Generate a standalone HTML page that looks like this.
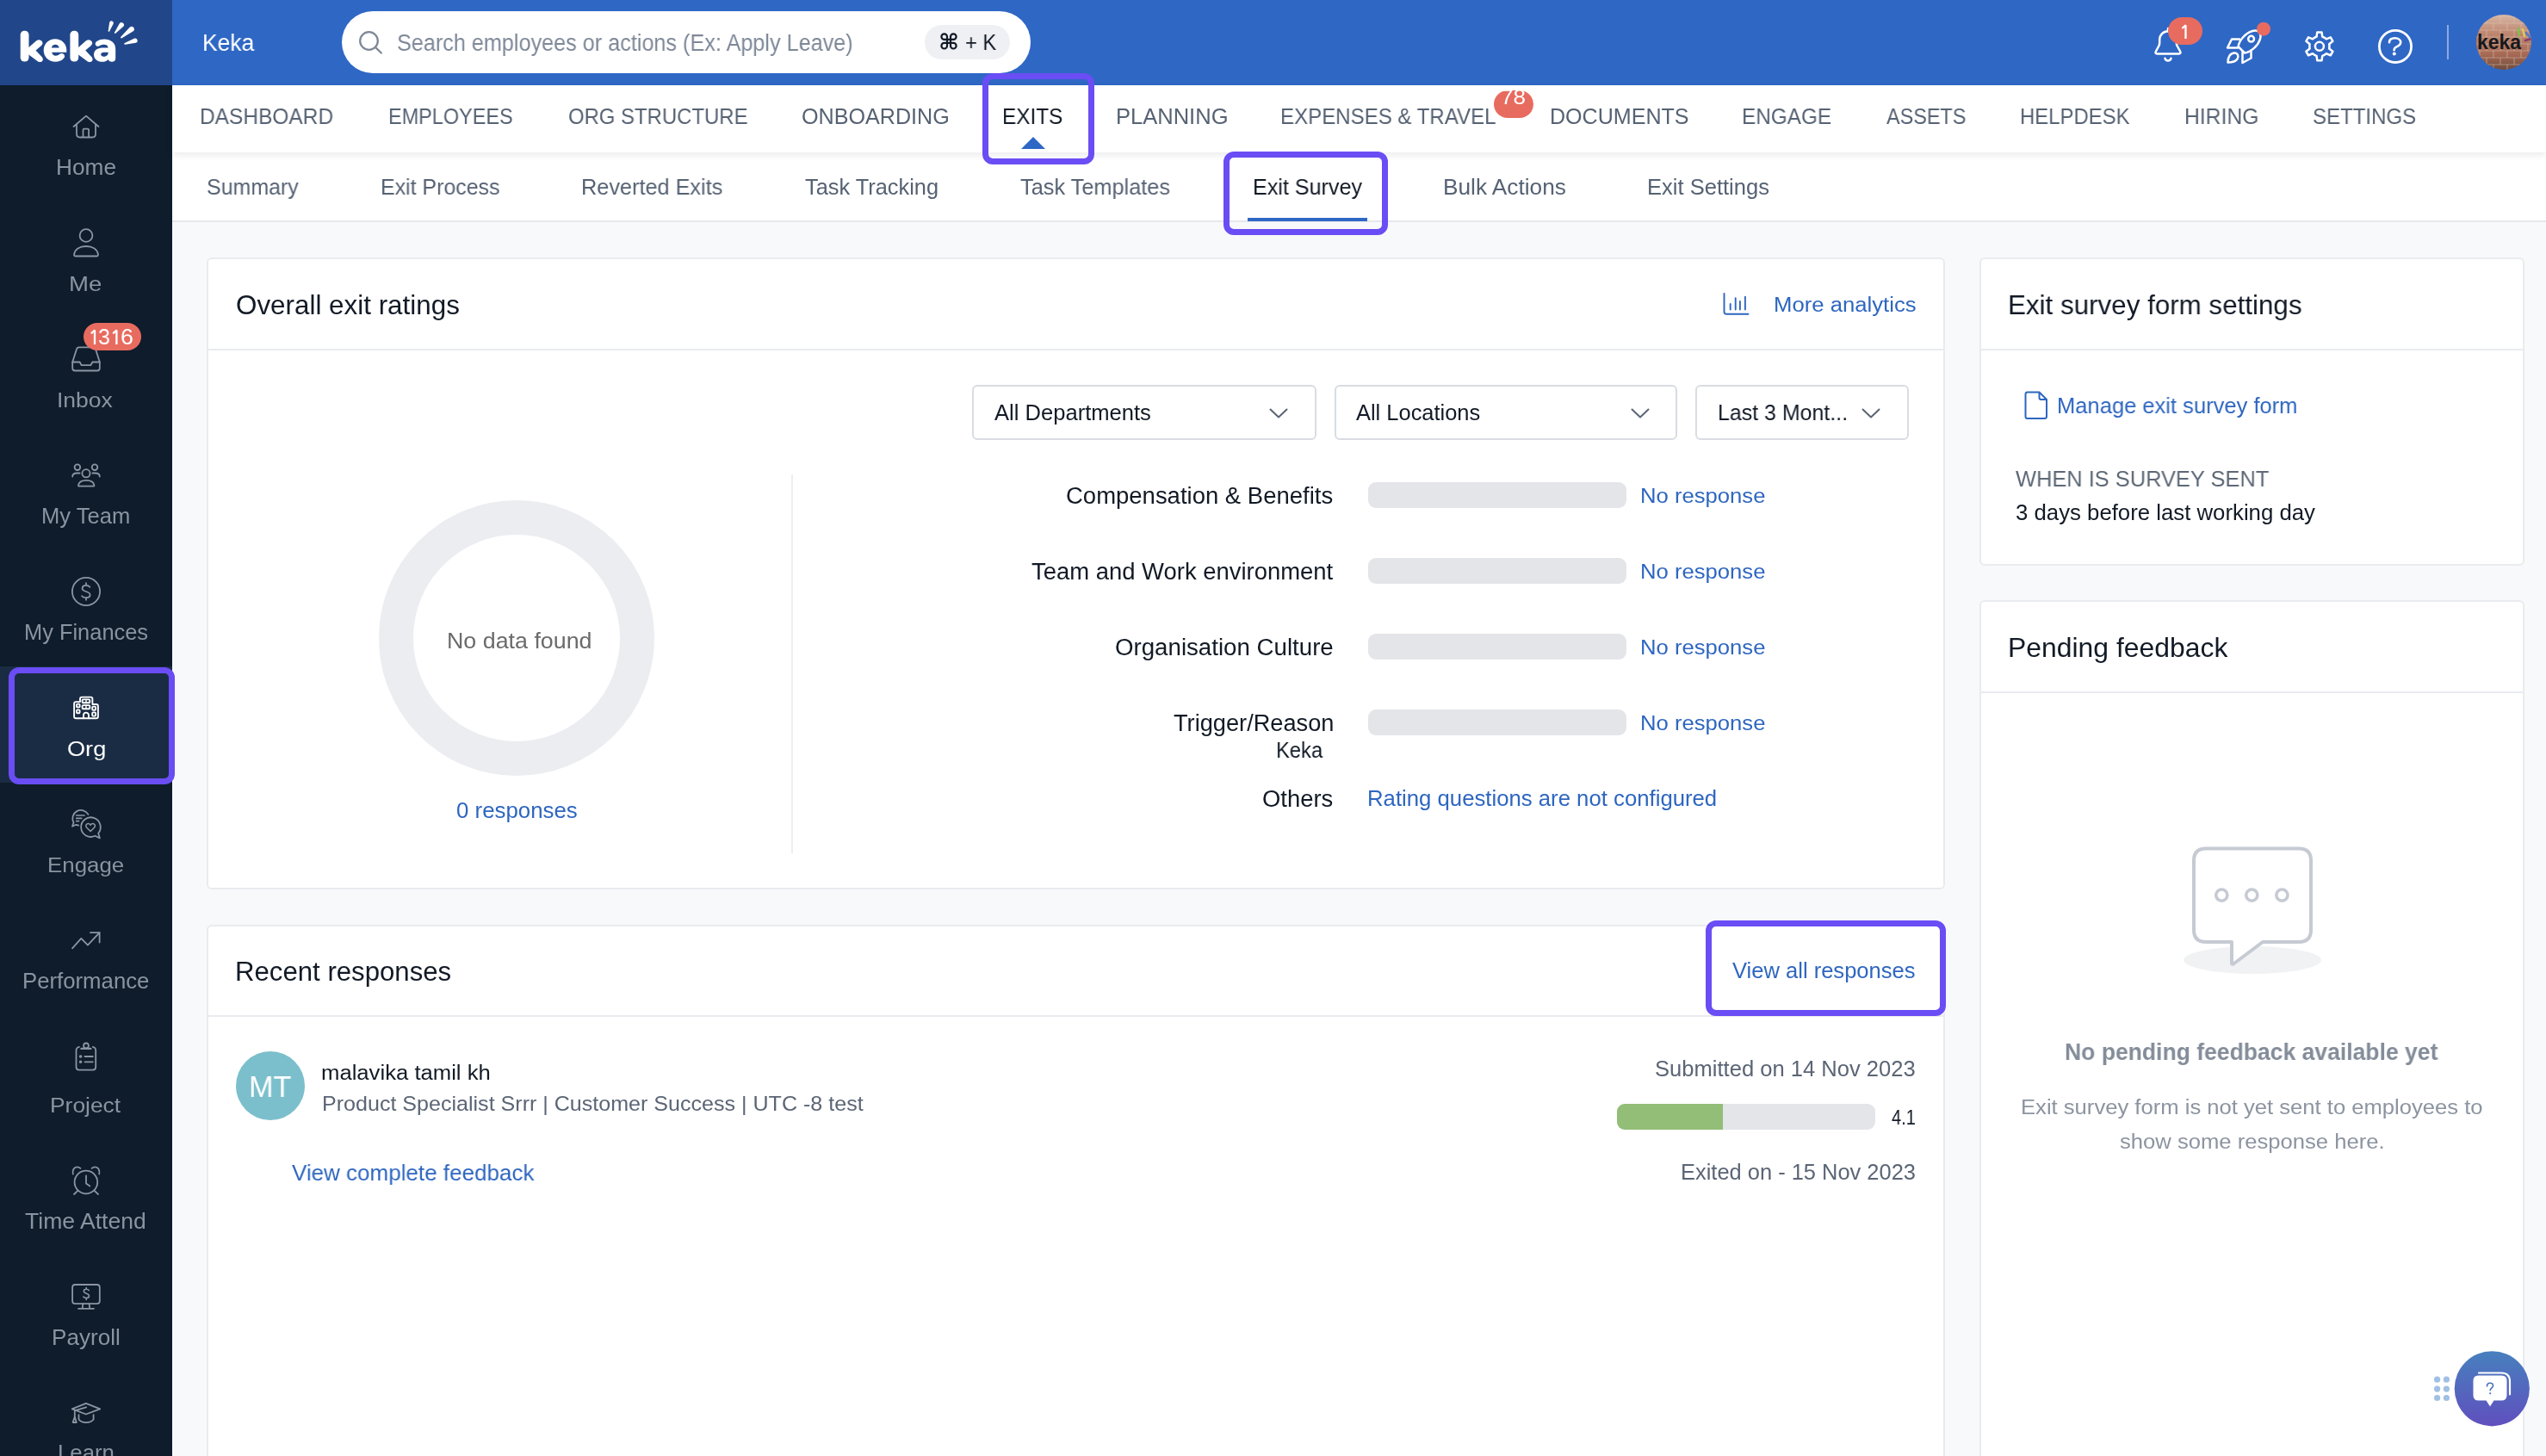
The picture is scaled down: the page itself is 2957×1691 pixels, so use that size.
<!DOCTYPE html>
<html><head><meta charset="utf-8"><title>Keka Exit Survey</title>
<style>
html,body{margin:0;padding:0;}
body{width:2957px;height:1691px;overflow:hidden;position:relative;background:#F8F9FB;font-family:'Liberation Sans', sans-serif;}
.t{position:absolute;white-space:nowrap;transform-origin:0 0;z-index:6;-webkit-font-smoothing:antialiased;will-change:transform;}
.a{position:absolute;box-sizing:border-box;}

</style></head><body>
<!-- top bar -->
<div class="a" style="left:0;top:0;width:200px;height:99px;background:#21478A"></div>
<div class="a" style="left:200px;top:0;width:2757px;height:99px;background:#2F67C5"></div>
<div class="a" style="left:397px;top:13px;width:800px;height:72px;border-radius:36px;background:#fff"></div>
<div class="a" style="left:1074px;top:29px;width:99px;height:40px;border-radius:20px;background:#EEF0F3"></div>
<!-- sidebar -->
<div class="a" style="left:0;top:99px;width:200px;height:1592px;background:#0E1C2B"></div>
<div class="a" style="left:0;top:774px;width:200px;height:135px;background:#1A2C43"></div>
<!-- subnav -->
<div class="a" style="left:200px;top:177px;width:2757px;height:81px;background:#fff;border-bottom:2px solid #E6E8EC"></div>
<!-- nav -->
<div class="a" style="left:200px;top:99px;width:2757px;height:78px;background:#fff;box-shadow:0 3px 8px rgba(20,30,50,0.09)"></div>
<!-- cards -->
<div class="a" style="left:240px;top:299px;width:2019px;height:734px;background:#fff;border:2px solid #E9EBEF;border-radius:6px"></div>
<div class="a" style="left:240px;top:405px;width:2019px;height:2px;background:#E9EBEF"></div>
<div class="a" style="left:240px;top:1074px;width:2019px;height:700px;background:#fff;border:2px solid #E9EBEF;border-radius:6px"></div>
<div class="a" style="left:240px;top:1179px;width:2019px;height:2px;background:#E9EBEF"></div>
<div class="a" style="left:2299px;top:299px;width:633px;height:358px;background:#fff;border:2px solid #E9EBEF;border-radius:6px"></div>
<div class="a" style="left:2299px;top:405px;width:633px;height:2px;background:#E9EBEF"></div>
<div class="a" style="left:2299px;top:697px;width:633px;height:1100px;background:#fff;border:2px solid #E9EBEF;border-radius:6px"></div>
<div class="a" style="left:2299px;top:803px;width:633px;height:2px;background:#E9EBEF"></div>
<!-- dropdowns -->
<div class="a" style="left:1129px;top:447px;width:400px;height:64px;border:2px solid #D9DCE2;border-radius:6px"></div>
<div class="a" style="left:1550px;top:447px;width:398px;height:64px;border:2px solid #D9DCE2;border-radius:6px"></div>
<div class="a" style="left:1969px;top:447px;width:248px;height:64px;border:2px solid #D9DCE2;border-radius:6px"></div>
<!-- divider vertical -->
<div class="a" style="left:919px;top:551px;width:2px;height:440px;background:#ECEEF1"></div>
<!-- donut -->
<div class="a" style="left:440px;top:581px;width:320px;height:320px;border-radius:50%;border:40px solid #ECEDF1"></div>
<!-- bars -->
<div class="a" style="left:1589px;top:560px;width:300px;height:30px;border-radius:9px;background:#E4E5E9"></div>
<div class="a" style="left:1589px;top:648px;width:300px;height:30px;border-radius:9px;background:#E4E5E9"></div>
<div class="a" style="left:1589px;top:736px;width:300px;height:30px;border-radius:9px;background:#E4E5E9"></div>
<div class="a" style="left:1589px;top:824px;width:300px;height:30px;border-radius:9px;background:#E4E5E9"></div>
<!-- response -->
<div class="a" style="left:274px;top:1221px;width:80px;height:80px;border-radius:50%;background:#7BBFCC"></div>
<div class="a" style="left:1878px;top:1282px;width:300px;height:30px;border-radius:9px;background:#E4E5E9;overflow:hidden"><div style="width:123px;height:30px;background:#93BE77"></div></div>
<!-- nav decorations -->
<div class="a" style="left:1449px;top:253px;width:139px;height:4px;background:#2F67C5"></div>
<div class="a" style="left:1735px;top:105px;width:46px;height:32px;border-radius:16px;background:#E86B60;z-index:5"></div>
<div class="a" style="left:97px;top:375px;width:67px;height:32px;border-radius:16px;background:#E86B60;z-index:5"></div>
<div class="a" style="left:2518px;top:20px;width:40px;height:32px;border-radius:16px;background:#E86B60;z-index:5"></div>
<!-- purple highlight boxes -->
<div class="a" style="left:1141px;top:85px;width:130px;height:106px;border:7px solid #6A4DF4;border-radius:12px;z-index:5"></div>
<div class="a" style="left:1421px;top:176px;width:191px;height:97px;border:7px solid #6A4DF4;border-radius:12px;z-index:5"></div>
<div class="a" style="left:10px;top:775px;width:193px;height:136px;border:7px solid #6A4DF4;border-radius:12px;z-index:5"></div>
<div class="a" style="left:1981px;top:1069px;width:279px;height:111px;border:7px solid #6A4DF4;border-radius:12px;z-index:5"></div>
<!-- svg overlay -->
<svg class="a" style="left:0;top:0;z-index:4" width="2957" height="1691" viewBox="0 0 2957 1691" fill="none" stroke-linecap="round" stroke-linejoin="round">
  <!-- logo -->
  <g fill="#fff" stroke="none">
    <rect x="23.7" y="35.7" width="9.8" height="35.8" rx="4.6"/>
    <path d="M30,58 L42,47.5 Q46,44.8 48.8,48 Q50.5,50.5 48,53 L41.5,58.6 L49,66.5 Q51,69.5 48.5,71.5 Q45.5,73 42.8,70.5 L30,61 Z"/>
    <path d="M64,45.3 C71.5,45.3 77.3,50.8 77.3,58 L77.3,60.8 L60.2,60.8 C60.8,63.5 62.5,64.7 64.8,64.7 C66.5,64.7 67.8,64 69,63 Q72,61 74.5,63.5 Q76,65.8 73.8,68 C71.5,70.5 68,71.8 64.5,71.8 C56.5,71.8 50.7,66.2 50.7,58.6 C50.7,51 56.5,45.3 64,45.3 Z M59.8,55.5 L68.8,55.5 C68.3,53 66.5,51.7 64.3,51.7 C62,51.7 60.3,53 59.8,55.5 Z" fill-rule="evenodd"/>
    <rect x="81.4" y="35.7" width="9.8" height="35.8" rx="4.6"/>
    <path d="M87.7,58 L99.7,47.5 Q103.7,44.8 106.5,48 Q108.2,50.5 105.7,53 L99.2,58.6 L106.7,66.5 Q108.7,69.5 106.2,71.5 Q103.2,73 100.5,70.5 L87.7,61 Z"/>
    <path d="M121,45.5 C128.5,45.5 134.2,49.5 134.2,57 L134.2,67.5 Q134.2,71.8 129.8,71.8 Q126.5,71.8 125.8,69 C124.2,70.9 121.8,71.8 119,71.8 C113,71.8 109,68.5 109,63.5 C109,57.5 114.5,55.5 119.5,55.5 L125.6,55.5 C125.3,52.8 123.3,51.8 120.8,51.8 C118.8,51.8 117.2,52.3 115.5,53.3 Q112.5,54.8 111,52.3 Q109.8,49.5 112.8,47.8 C115.2,46.3 118,45.5 121,45.5 Z M125.6,60.8 L120.5,60.8 C118.5,60.8 117.2,61.7 117.2,63.3 C117.2,64.9 118.6,65.8 120.5,65.8 C123.3,65.8 125.6,64 125.6,61.5 Z" fill-rule="evenodd"/>
  </g>
  <g fill="#fff" stroke="none">
    <path d="M127.21,36.19 L131.74,27.42 A2.4,2.4 0 0 0 127.18,25.94 L125.69,35.69 A0.8,0.8 0 0 0 127.21,36.19 Z"/>
    <path d="M134.47,38.57 L143.33,30.78 A2.9,2.9 0 0 0 138.82,27.13 L133.07,37.43 A0.9,0.9 0 0 0 134.47,38.57 Z"/>
    <path d="M141.61,44.25 L154.73,36.36 A3.1,3.1 0 0 0 150.84,31.53 L140.35,42.69 A1.0,1.0 0 0 0 141.61,44.25 Z"/>
    <path d="M145.32,51.70 L157.81,49.77 A2.7,2.7 0 0 0 156.23,44.61 L144.80,49.98 A0.9,0.9 0 0 0 145.32,51.70 Z"/>
  </g>
  <!-- exits triangle -->
  <polygon points="1186,173 1214,173 1200,159" fill="#2F67C5" stroke="none"/>
  <!-- search icon -->
  <circle cx="428.5" cy="47.5" r="10.3" stroke="#7E8898" stroke-width="2.3"/>
  <line x1="436.2" y1="55.2" x2="442.8" y2="61.5" stroke="#7E8898" stroke-width="2.3"/>
  <!-- cmd symbol -->
  <path transform="translate(1102,47.9)" stroke="#121A26" stroke-width="2.2" d="M-2,-2 H2 V2 H-2 Z M-2,-2 V-5.3 A3.3,3.3 0 1 0 -5.3,-2 H-2 M2,-2 V-5.3 A3.3,3.3 0 1 1 5.3,-2 H2 M-2,2 V5.3 A3.3,3.3 0 1 1 -5.3,2 H-2 M2,2 V5.3 A3.3,3.3 0 1 0 5.3,2 H2"/>
  <!-- chevrons -->
  <polyline points="1475.5,475.5 1485,484.5 1494.5,475.5" stroke="#5A6473" stroke-width="2"/>
  <polyline points="1895.5,475.5 1905,484.5 1914.5,475.5" stroke="#5A6473" stroke-width="2"/>
  <polyline points="2163.5,475.5 2173,484.5 2182.5,475.5" stroke="#5A6473" stroke-width="2"/>
  <!-- topbar icons -->
  <g stroke="#fff" stroke-width="2.5">
    <path d="M2505.5,62.5 H2530.5 Q2533.5,62.5 2532,59.5 L2528.5,53 Q2527.8,51.5 2527.8,49.5 L2527.8,46 A9.8,9.8 0 0 0 2508.2,46 L2508.2,49.5 Q2508.2,51.5 2507.5,53 L2504,59.5 Q2502.5,62.5 2505.5,62.5 Z"/>
    <line x1="2518" y1="33" x2="2518" y2="36"/>
    <path d="M2514.5,67.8 A3.6,3.6 0 0 0 2521.5,67.8"/>
    <path d="M2599.6,54.1 A16,9 -45 1 1 2607.0,61.5 Z"/>
    <circle cx="2614.6" cy="45.2" r="3.4"/>
    <path d="M2601,45.5 L2592,45.5 L2587,55.5 L2599,55.5"/>
    <path d="M2604.5,60.5 L2604.5,73 L2614.5,67.5 L2614.5,58.5"/>
    <path d="M2587.5,72.5 C2587.5,66 2590.5,61.5 2595,61.5 C2599,61.5 2600.5,65 2598.5,68.5 C2596.5,71.5 2592,72.5 2587.5,72.5 Z"/>
    <path d="M2688.10,43.75 L2690.51,42.71 L2691.30,37.40 L2696.50,37.40 L2697.29,42.71 L2699.70,43.75 L2701.81,45.32 L2706.80,43.35 L2709.40,47.85 L2705.20,51.19 L2705.50,53.80 L2705.20,56.41 L2709.40,59.75 L2706.80,64.25 L2701.81,62.28 L2699.70,63.85 L2697.29,64.89 L2696.50,70.20 L2691.30,70.20 L2690.51,64.89 L2688.10,63.85 L2685.99,62.28 L2681.00,64.25 L2678.40,59.75 L2682.60,56.41 L2682.30,53.80 L2682.60,51.19 L2678.40,47.85 L2681.00,43.35 L2685.99,45.32 Z"/>
    <circle cx="2693.9" cy="53.8" r="5"/>
    <circle cx="2782" cy="53.9" r="18.6" stroke-width="2.8"/>
    <path d="M2775,49.2 C2775,45.8 2777.8,44.3 2781.6,44.3 C2785.6,44.3 2788.2,46.4 2788.2,49.2 C2788.2,52 2786,53.2 2783.4,54.4 C2781.4,55.3 2780.6,56.3 2780.6,58.2" stroke-width="2.6"/>
  </g>
  <circle cx="2780.8" cy="62.6" r="2" fill="#fff" stroke="none"/>
  <line x1="2843" y1="29" x2="2843" y2="69" stroke="rgba(255,255,255,0.45)" stroke-width="2" stroke-linecap="butt"/>
  <circle cx="2629" cy="33.7" r="8" fill="#E86B60" stroke="none"/>
  <!-- avatar -->
  <defs>
    <linearGradient id="brick" x1="0" y1="0" x2="0" y2="1">
      <stop offset="0" stop-color="#D9BBA8"/>
      <stop offset="0.35" stop-color="#BE8670"/>
      <stop offset="0.7" stop-color="#A86A55"/>
      <stop offset="1" stop-color="#6A4A3C"/>
    </linearGradient>
    <clipPath id="avclip"><circle cx="2908" cy="49" r="32"/></clipPath>
    <linearGradient id="chatg" x1="0" y1="0" x2="0" y2="1">
      <stop offset="0" stop-color="#4780BE"/>
      <stop offset="1" stop-color="#604FBE"/>
    </linearGradient>
  </defs>
  <g clip-path="url(#avclip)">
    <rect x="2874" y="15" width="68" height="68" fill="url(#brick)" stroke="none"/>
    <g stroke="rgba(225,200,185,0.45)" stroke-width="1.2" stroke-linecap="butt">
      <line x1="2874" y1="19" x2="2942" y2="19"/><line x1="2874" y1="27" x2="2942" y2="27"/><line x1="2874" y1="35" x2="2942" y2="35"/><line x1="2874" y1="43" x2="2942" y2="43"/><line x1="2874" y1="51" x2="2942" y2="51"/><line x1="2874" y1="59" x2="2942" y2="59"/><line x1="2874" y1="67" x2="2942" y2="67"/><line x1="2874" y1="75" x2="2942" y2="75"/>
      <line x1="2872" y1="19" x2="2872" y2="27"/><line x1="2888" y1="19" x2="2888" y2="27"/><line x1="2904" y1="19" x2="2904" y2="27"/><line x1="2920" y1="19" x2="2920" y2="27"/><line x1="2936" y1="19" x2="2936" y2="27"/><line x1="2864" y1="27" x2="2864" y2="35"/><line x1="2880" y1="27" x2="2880" y2="35"/><line x1="2896" y1="27" x2="2896" y2="35"/><line x1="2912" y1="27" x2="2912" y2="35"/><line x1="2928" y1="27" x2="2928" y2="35"/><line x1="2944" y1="27" x2="2944" y2="35"/><line x1="2872" y1="35" x2="2872" y2="43"/><line x1="2888" y1="35" x2="2888" y2="43"/><line x1="2904" y1="35" x2="2904" y2="43"/><line x1="2920" y1="35" x2="2920" y2="43"/><line x1="2936" y1="35" x2="2936" y2="43"/><line x1="2864" y1="43" x2="2864" y2="51"/><line x1="2880" y1="43" x2="2880" y2="51"/><line x1="2896" y1="43" x2="2896" y2="51"/><line x1="2912" y1="43" x2="2912" y2="51"/><line x1="2928" y1="43" x2="2928" y2="51"/><line x1="2944" y1="43" x2="2944" y2="51"/><line x1="2872" y1="51" x2="2872" y2="59"/><line x1="2888" y1="51" x2="2888" y2="59"/><line x1="2904" y1="51" x2="2904" y2="59"/><line x1="2920" y1="51" x2="2920" y2="59"/><line x1="2936" y1="51" x2="2936" y2="59"/><line x1="2864" y1="59" x2="2864" y2="67"/><line x1="2880" y1="59" x2="2880" y2="67"/><line x1="2896" y1="59" x2="2896" y2="67"/><line x1="2912" y1="59" x2="2912" y2="67"/><line x1="2928" y1="59" x2="2928" y2="67"/><line x1="2944" y1="59" x2="2944" y2="67"/><line x1="2872" y1="67" x2="2872" y2="75"/><line x1="2888" y1="67" x2="2888" y2="75"/><line x1="2904" y1="67" x2="2904" y2="75"/><line x1="2920" y1="67" x2="2920" y2="75"/><line x1="2936" y1="67" x2="2936" y2="75"/><line x1="2864" y1="75" x2="2864" y2="83"/><line x1="2880" y1="75" x2="2880" y2="83"/><line x1="2896" y1="75" x2="2896" y2="83"/><line x1="2912" y1="75" x2="2912" y2="83"/><line x1="2928" y1="75" x2="2928" y2="83"/><line x1="2944" y1="75" x2="2944" y2="83"/>
    </g>
    <text x="2877" y="57" font-family="Liberation Sans" font-weight="bold" font-size="24" fill="#15181C" stroke="none" textLength="51" lengthAdjust="spacingAndGlyphs">keka</text>
    <path d="M2925,33 L2926,41" stroke="#7BC24A" stroke-width="2.5"/>
    <path d="M2930,34 L2932,42" stroke="#E2C65A" stroke-width="2.5"/>
    <path d="M2934,38 L2938,43" stroke="#4C7BD0" stroke-width="2.5"/>
    <path d="M2933,47 L2940,45" stroke="#8A3A6A" stroke-width="2.5"/>
  </g>
  <!-- sidebar icons -->
  <g stroke="#8B95A3" stroke-width="1.8">
    <path d="M85.5,147 L100,134.6 L114.5,147 M89,144.5 V155.5 Q89,159.5 93,159.5 H107 Q111,159.5 111,155.5 V144.5 M96.5,159.5 V151 Q96.5,149.7 97.8,149.7 H101.8 Q103.1,149.7 103.1,151 V159.5"/>
    <circle cx="100" cy="273.5" r="7.4"/>
    <path d="M87.8,297.5 H112.2 Q114.2,297.5 113.9,295.3 C113,289.3 107.5,286 100,286 C92.5,286 87,289.3 86.1,295.3 Q85.8,297.5 87.8,297.5 Z"/>
    <path d="M84.2,420.5 L89,405.5 Q89.6,403.3 91.8,403.3 H108.2 Q110.4,403.3 111,405.5 L115.8,420.5 V427.5 Q115.8,430.5 112.8,430.5 H87.2 Q84.2,430.5 84.2,427.5 Z"/>
    <path d="M84.2,420.5 H92.6 L94.7,424.2 H105.3 L107.4,420.5 H115.8"/>
    <circle cx="100" cy="549.8" r="4.6"/>
    <path d="M92,564.6 H108.4 Q109.6,564.6 109.4,563.4 C108.7,560 105,557.8 100.2,557.8 C95.4,557.8 91.7,560 91,563.4 Q90.8,564.6 92,564.6 Z"/>
    <circle cx="89.9" cy="542.7" r="3.3"/>
    <circle cx="110" cy="542.7" r="3.3"/>
    <path d="M84.2,553.6 C84.2,551 86.2,549.5 89.5,549.5 H92.6"/>
    <path d="M115.8,553.6 C115.8,551 113.8,549.5 110.5,549.5 H107.4"/>
    <circle cx="100" cy="687" r="16.1"/>
    <path d="M104.3,681.8 C103.3,680.3 101.6,679.9 100,679.9 C97.6,679.9 95.6,681.2 95.6,683.4 C95.6,688 104.6,686 104.6,690.8 C104.6,693 102.6,694.2 100.1,694.2 C98.1,694.2 96.2,693.6 95.2,692.2 M100,677.2 V679.9 M100,694.2 V696.8"/>
    <path d="M102.5,945.9 A9.2,9.2 0 1 0 85.5,955.3 L84,959.8 L88.5,957.8 L91.2,958.7"/>
    <path d="M88.7,947 H98 M88.7,950.4 H94.7 M88.7,953.6 H91.5" stroke-width="1.7"/>
    <path d="M114.2,967.8 A11.3,11.3 0 1 0 110.4,970.8 L115.9,973.4 Z"/>
    <path d="M105.1,965.5 L100.8,961.3 C99.3,959.8 99.5,957.4 101.5,956.7 C103,956.2 104.3,957 105.1,958.2 C105.9,957 107.2,956.2 108.7,956.7 C110.7,957.4 110.9,959.8 109.4,961.3 Z" stroke-width="1.6"/>
    <polyline points="84,1101.3 94.3,1089.9 101.9,1097.7 115.6,1083.2"/>
    <polyline points="105,1083.2 115.6,1083.2 115.6,1094.5"/>
    <path d="M92,1215.8 Q88.5,1216.5 88.5,1220 V1239.3 Q88.5,1242.6 91.8,1242.6 H107.9 Q111.2,1242.6 111.2,1239.3 V1220 Q111.2,1216.5 107.8,1215.8"/>
    <circle cx="100" cy="1214.4" r="2.9"/>
    <path d="M94.4,1217.9 H105.5" stroke-width="2.2"/>
    <path d="M98.5,1227 H107.8 M98.5,1233.3 H107.8"/>
    <circle cx="93.6" cy="1227" r="0.8" stroke-width="2"/>
    <circle cx="93.6" cy="1233.3" r="0.8" stroke-width="2"/>
    <circle cx="99.9" cy="1373" r="13.3"/>
    <path d="M100,1365.3 V1374.4 L104.3,1377.5"/>
    <path d="M84.8,1363.5 C83.8,1359 86,1355.3 89.5,1355.3 C91,1355.3 92.5,1355.9 93.4,1356.8"/>
    <path d="M115.2,1363.5 C116.2,1359 114,1355.3 110.5,1355.3 C109,1355.3 107.5,1355.9 106.6,1356.8"/>
    <path d="M90.1,1383.1 L86,1387 M109.9,1383.1 L114,1387"/>
    <rect x="84.1" y="1492" width="31.7" height="22.2" rx="3.2"/>
    <path d="M96.4,1514.2 L95.6,1519.8 M103.5,1514.2 L104.3,1519.8 M91,1519.8 H109"/>
    <path d="M103.2,1498.6 C102.4,1497.6 101.3,1497.3 100.2,1497.3 C98.6,1497.3 97.3,1498.2 97.3,1499.6 C97.3,1502.8 103.5,1501.5 103.5,1504.9 C103.5,1506.5 102,1507.5 100.2,1507.5 C98.8,1507.5 97.5,1507 96.8,1506.1 M100.2,1495.6 V1497.3 M100.2,1507.5 V1509.4" stroke-width="1.6"/>
    <path d="M83.7,1636.3 L99.9,1629.8 L116.2,1636.3 L99.9,1642.5 Z"/>
    <path d="M86.8,1638.4 L100.2,1634.4 M86.8,1638.4 V1646"/>
    <path d="M86.8,1645.5 L84.6,1652 H88.8 Z"/>
    <path d="M91.5,1643.2 V1648.5 C93.5,1651 96.5,1652.1 100,1652.1 C103.5,1652.1 106.5,1651 108.6,1648.5 V1643.2"/>
  </g>
  <!-- org icon (white) -->
  <g stroke="#FFFFFF" stroke-width="1.9">
    <path d="M88.2,815.1 H93 V811.7 Q93,809.6 95.1,809.6 H105.3 Q107.4,809.6 107.4,811.7 V818 H111.8 Q113.9,818 113.9,820.1 V832.2 Q113.9,834.3 111.8,834.3 H88.2 Q86.1,834.3 86.1,832.2 V817.2 Q86.1,815.1 88.2,815.1 Z"/>
    <rect x="89" y="817.6" width="3.6" height="3.8" rx="1"/>
    <rect x="89" y="824.4" width="3.6" height="3.8" rx="1"/>
    <rect x="95.6" y="812.4" width="8.7" height="3.9" rx="1"/><path d="M100,812.4 V816.3" stroke-width="1.4"/>
    <rect x="95.6" y="819.1" width="8.7" height="4.2" rx="1"/><path d="M100,819.1 V823.3" stroke-width="1.4"/>
    <rect x="107.2" y="820.6" width="3.9" height="4.2" rx="1"/>
    <rect x="107.2" y="827.4" width="3.9" height="4.2" rx="1"/>
    <path d="M97,834.3 V830.6 A3,3 0 0 1 103,830.6 V834.3"/>
  </g>
  <!-- analytics icon -->
  <g stroke="#2E66C0" stroke-width="1.9">
    <path d="M2002.5,341 V362 Q2002.5,364.8 2005.3,364.8 H2030.5"/>
    <path d="M2009.7,353 V359.5 M2015.7,346.3 V359.5 M2020.9,350 V359.5 M2026.9,344.8 V359.5"/>
  </g>
  <!-- doc icon -->
  <path d="M2354.5,455.5 H2368.5 L2377,464 V483.5 Q2377,486 2374.5,486 H2354.5 Q2352.5,486 2352.5,483.5 V458 Q2352.5,455.5 2354.5,455.5 Z M2368.5,455.5 V462 Q2368.5,464 2370.5,464 H2377" stroke="#2E66C0" stroke-width="2"/>
  <!-- pending feedback illustration -->
  <ellipse cx="2616" cy="1115" rx="80" ry="16" fill="#F1F2F4" stroke="none"/>
  <path d="M2562,985.5 H2670 Q2684,985.5 2684,999.5 V1080 Q2684,1094 2670,1094 H2628 L2594,1119.5 Q2592,1120.5 2592,1118.5 V1094 H2562 Q2548,1094 2548,1080 V999.5 Q2548,985.5 2562,985.5 Z" fill="#fff" stroke="#C6CAD3" stroke-width="4"/>
  <circle cx="2580.3" cy="1039.6" r="6.6" stroke="#C6CAD3" stroke-width="3.6"/>
  <circle cx="2615.3" cy="1039.6" r="6.6" stroke="#C6CAD3" stroke-width="3.6"/>
  <circle cx="2650.4" cy="1039.6" r="6.6" stroke="#C6CAD3" stroke-width="3.6"/>
  <!-- chat widget -->
  <g fill="#A0C0E4" stroke="none">
    <circle cx="2830.6" cy="1602.2" r="3.6"/><circle cx="2841.4" cy="1602.2" r="3.6"/>
    <circle cx="2830.6" cy="1613.1" r="3.6"/><circle cx="2841.4" cy="1613.1" r="3.6"/>
    <circle cx="2830.6" cy="1623.5" r="3.6"/><circle cx="2841.4" cy="1623.5" r="3.6"/>
  </g>
  <circle cx="2894.3" cy="1612.8" r="43.6" fill="url(#chatg)" stroke="none"/>
  <path d="M2879,1594.5 H2905 Q2915,1594.5 2915,1604.5 V1619.5" stroke="#fff" stroke-width="2.2"/>
  <path d="M2878.5,1597.5 H2905.5 Q2911.5,1597.5 2911.5,1603.5 V1620.5 Q2911.5,1626.5 2905.5,1626.5 H2896.5 L2892,1633.5 L2887.5,1626.5 H2878.5 Q2872.5,1626.5 2872.5,1620.5 V1603.5 Q2872.5,1597.5 2878.5,1597.5 Z" fill="#fff" stroke="none"/>
  <path d="M2888.5,1610 C2888.5,1607.5 2890,1606.3 2892,1606.3 C2894.2,1606.3 2895.5,1607.6 2895.5,1609.5 C2895.5,1611.8 2892.2,1612 2892.2,1614.8" stroke="#4A70B8" stroke-width="1.6"/>
  <circle cx="2892.2" cy="1618.3" r="1.1" fill="#4A70B8" stroke="none"/>
</svg>
<svg class="a" style="left:0;top:0;z-index:7" width="2957" height="1691" viewBox="0 0 2957 1691" fill="none" stroke="#fff" stroke-width="2.3" stroke-linejoin="bevel" stroke-linecap="butt">
  <path d="M2534.4,33 L2538.5,29.3 V44.9"/>
  <path d="M105.8,387.3 L110,383.5 V399.9"/>
  <path d="M131.2,387.3 L135.4,383.5 V399.9"/>
</svg>

<div class="t" style="left:235.07px;top:35.62px;font-size:27.39px;line-height:27.39px;color:#FFFFFF;transform:scaleX(0.9639);">Keka</div><div class="t" style="left:460.78px;top:35.62px;font-size:27.39px;line-height:27.39px;color:#7E8898;transform:scaleX(0.9208);">Search employees or actions (Ex: Apply Leave)</div><div class="t" style="left:1120.89px;top:35.70px;font-size:26.23px;line-height:26.23px;color:#121A26;transform:scaleX(0.9053);">+ K</div><div class="t" style="left:231.85px;top:123.09px;font-size:25.07px;line-height:25.07px;color:#566273;transform:scaleX(0.9769);">DASHBOARD</div><div class="t" style="left:451.13px;top:123.09px;font-size:25.07px;line-height:25.07px;color:#566273;transform:scaleX(0.9355);">EMPLOYEES</div><div class="t" style="left:659.65px;top:123.09px;font-size:25.07px;line-height:25.07px;color:#566273;transform:scaleX(0.9535);">ORG STRUCTURE</div><div class="t" style="left:931.30px;top:123.09px;font-size:25.07px;line-height:25.07px;color:#566273;transform:scaleX(1.0030);">ONBOARDING</div><div class="t" style="left:1295.66px;top:123.09px;font-size:25.07px;line-height:25.07px;color:#566273;transform:scaleX(1.0185);">PLANNING</div><div class="t" style="left:1487.38px;top:123.09px;font-size:25.07px;line-height:25.07px;color:#566273;transform:scaleX(0.9601);">EXPENSES &amp; TRAVEL</div><div class="t" style="left:1800.00px;top:123.09px;font-size:25.07px;line-height:25.07px;color:#566273;">DOCUMENTS</div><div class="t" style="left:2023.06px;top:123.09px;font-size:25.07px;line-height:25.07px;color:#566273;transform:scaleX(0.9712);">ENGAGE</div><div class="t" style="left:2190.90px;top:123.09px;font-size:25.07px;line-height:25.07px;color:#566273;transform:scaleX(0.9337);">ASSETS</div><div class="t" style="left:2346.09px;top:123.09px;font-size:25.07px;line-height:25.07px;color:#566273;transform:scaleX(0.9542);">HELPDESK</div><div class="t" style="left:2537.03px;top:123.09px;font-size:25.07px;line-height:25.07px;color:#566273;transform:scaleX(0.9845);">HIRING</div><div class="t" style="left:2686.04px;top:123.09px;font-size:25.07px;line-height:25.07px;color:#566273;transform:scaleX(0.9593);">SETTINGS</div><div class="t" style="left:1163.76px;top:123.09px;font-size:25.07px;line-height:25.07px;color:#121A26;transform:scaleX(0.9696);">EXITS</div><div class="t" style="left:1742.92px;top:101.43px;font-size:24.20px;line-height:24.20px;color:#FFFFFF;transform:scaleX(1.0800);">78</div><div class="t" style="left:239.72px;top:204.74px;font-size:25.36px;line-height:25.36px;color:#566273;transform:scaleX(0.9841);">Summary</div><div class="t" style="left:442.03px;top:204.74px;font-size:25.36px;line-height:25.36px;color:#566273;transform:scaleX(0.9826);">Exit Process</div><div class="t" style="left:674.61px;top:204.74px;font-size:25.36px;line-height:25.36px;color:#566273;transform:scaleX(0.9963);">Reverted Exits</div><div class="t" style="left:934.80px;top:204.74px;font-size:25.36px;line-height:25.36px;color:#566273;">Task Tracking</div><div class="t" style="left:1185.40px;top:204.74px;font-size:25.36px;line-height:25.36px;color:#566273;transform:scaleX(0.9977);">Task Templates</div><div class="t" style="left:1676.33px;top:204.74px;font-size:25.36px;line-height:25.36px;color:#566273;transform:scaleX(1.0341);">Bulk Actions</div><div class="t" style="left:1912.99px;top:204.74px;font-size:25.36px;line-height:25.36px;color:#566273;transform:scaleX(1.0072);">Exit Settings</div><div class="t" style="left:1454.82px;top:204.74px;font-size:25.36px;line-height:25.36px;color:#121A26;transform:scaleX(0.9905);">Exit Survey</div><div class="t" style="left:64.77px;top:182.17px;font-size:25.80px;line-height:25.80px;color:#8A94A1;transform:scaleX(1.0167);">Home</div><div class="t" style="left:80.39px;top:317.67px;font-size:23.91px;line-height:23.91px;color:#8A94A1;transform:scaleX(1.1533);">Me</div><div class="t" style="left:66.45px;top:453.06px;font-size:24.64px;line-height:24.64px;color:#8A94A1;transform:scaleX(1.0759);">Inbox</div><div class="t" style="left:48.47px;top:586.67px;font-size:25.22px;line-height:25.22px;color:#8A94A1;transform:scaleX(1.0133);">My Team</div><div class="t" style="left:27.68px;top:721.67px;font-size:25.22px;line-height:25.22px;color:#8A94A1;transform:scaleX(1.0079);">My Finances</div><div class="t" style="left:54.70px;top:993.06px;font-size:24.64px;line-height:24.64px;color:#8A94A1;transform:scaleX(1.0500);">Engage</div><div class="t" style="left:25.98px;top:1127.42px;font-size:25.51px;line-height:25.51px;color:#8A94A1;transform:scaleX(1.0098);">Performance</div><div class="t" style="left:58.26px;top:1272.06px;font-size:24.64px;line-height:24.64px;color:#8A94A1;transform:scaleX(1.0716);">Project</div><div class="t" style="left:29.35px;top:1406.44px;font-size:25.36px;line-height:25.36px;color:#8A94A1;transform:scaleX(1.0470);">Time Attend</div><div class="t" style="left:60.15px;top:1541.32px;font-size:25.51px;line-height:25.51px;color:#8A94A1;transform:scaleX(1.0230);">Payroll</div><div class="t" style="left:66.64px;top:1675.49px;font-size:25.07px;line-height:25.07px;color:#8A94A1;transform:scaleX(1.0279);">Learn</div><div class="t" style="left:77.86px;top:857.67px;font-size:23.91px;line-height:23.91px;color:#FFFFFF;transform:scaleX(1.1351);">Org</div><div class="t" style="left:114.32px;top:379.34px;font-size:25.36px;line-height:25.36px;color:#FFFFFF;transform:scaleX(0.9833);">3</div><div class="t" style="left:140.14px;top:379.34px;font-size:25.36px;line-height:25.36px;color:#FFFFFF;transform:scaleX(1.0583);">6</div><div class="t" style="left:274.38px;top:340.48px;font-size:30.72px;line-height:30.72px;color:#121A26;transform:scaleX(1.0214);">Overall exit ratings</div><div class="t" style="left:2059.51px;top:342.06px;font-size:24.64px;line-height:24.64px;color:#2E66C0;transform:scaleX(1.0429);">More analytics</div><div class="t" style="left:1155.20px;top:467.34px;font-size:25.36px;line-height:25.36px;color:#121A26;transform:scaleX(1.0083);">All Departments</div><div class="t" style="left:1575.20px;top:466.69px;font-size:25.07px;line-height:25.07px;color:#121A26;transform:scaleX(1.0149);">All Locations</div><div class="t" style="left:1994.65px;top:467.10px;font-size:25.65px;line-height:25.65px;color:#121A26;transform:scaleX(0.9728);">Last 3 Mont...</div><div class="t" style="left:519.12px;top:732.17px;font-size:25.80px;line-height:25.80px;color:#6B6B6B;transform:scaleX(1.0396);">No data found</div><div class="t" style="left:529.69px;top:928.80px;font-size:25.65px;line-height:25.65px;color:#2E66C0;transform:scaleX(1.0072);">0 responses</div><div class="t" style="left:1237.97px;top:563.21px;font-size:26.81px;line-height:26.81px;color:#121A26;transform:scaleX(1.0256);">Compensation &amp; Benefits</div><div class="t" style="left:1904.63px;top:563.53px;font-size:24.78px;line-height:24.78px;color:#2E66C0;transform:scaleX(1.0355);">No response</div><div class="t" style="left:1197.58px;top:651.21px;font-size:26.81px;line-height:26.81px;color:#121A26;transform:scaleX(1.0238);">Team and Work environment</div><div class="t" style="left:1904.63px;top:651.53px;font-size:24.78px;line-height:24.78px;color:#2E66C0;transform:scaleX(1.0355);">No response</div><div class="t" style="left:1294.77px;top:739.21px;font-size:26.81px;line-height:26.81px;color:#121A26;transform:scaleX(1.0324);">Organisation Culture</div><div class="t" style="left:1904.63px;top:739.53px;font-size:24.78px;line-height:24.78px;color:#2E66C0;transform:scaleX(1.0355);">No response</div><div class="t" style="left:1362.99px;top:827.21px;font-size:26.81px;line-height:26.81px;color:#121A26;transform:scaleX(1.0149);">Trigger/Reason</div><div class="t" style="left:1904.63px;top:827.53px;font-size:24.78px;line-height:24.78px;color:#2E66C0;transform:scaleX(1.0355);">No response</div><div class="t" style="left:1482.15px;top:859.40px;font-size:25.65px;line-height:25.65px;color:#121A26;transform:scaleX(0.9263);">Keka</div><div class="t" style="left:1465.88px;top:915.21px;font-size:26.81px;line-height:26.81px;color:#121A26;transform:scaleX(1.0228);">Others</div><div class="t" style="left:1588.45px;top:914.69px;font-size:25.07px;line-height:25.07px;color:#2E66C0;transform:scaleX(1.0265);">Rating questions are not configured</div><div class="t" style="left:273.27px;top:1113.76px;font-size:30.87px;line-height:30.87px;color:#121A26;transform:scaleX(1.0098);">Recent responses</div><div class="t" style="left:2011.90px;top:1115.09px;font-size:25.07px;line-height:25.07px;color:#2E66C0;transform:scaleX(1.0192);">View all responses</div><div class="t" style="left:288.86px;top:1245.31px;font-size:34.93px;line-height:34.93px;color:#FFFFFF;transform:scaleX(0.9809);">MT</div><div class="t" style="left:372.88px;top:1234.39px;font-size:24.25px;line-height:24.25px;color:#121A26;transform:scaleX(1.0582);">malavika tamil kh</div><div class="t" style="left:373.98px;top:1269.53px;font-size:24.78px;line-height:24.78px;color:#5B6575;transform:scaleX(1.0120);">Product Specialist Srrr | Customer Success | UTC -8 test</div><div class="t" style="left:338.60px;top:1349.26px;font-size:26.52px;line-height:26.52px;color:#2E66C0;transform:scaleX(0.9805);">View complete feedback</div><div class="t" style="left:1921.98px;top:1228.69px;font-size:25.07px;line-height:25.07px;color:#5B6575;transform:scaleX(1.0200);">Submitted on 14 Nov 2023</div><div class="t" style="left:2197.19px;top:1286.06px;font-size:24.64px;line-height:24.64px;color:#121A26;transform:scaleX(0.8125);">4.1</div><div class="t" style="left:1951.97px;top:1349.29px;font-size:25.07px;line-height:25.07px;color:#5B6575;transform:scaleX(1.0150);">Exited on - 15 Nov 2023</div><div class="t" style="left:2332.02px;top:338.54px;font-size:31.59px;line-height:31.59px;color:#121A26;transform:scaleX(0.9929);">Exit survey form settings</div><div class="t" style="left:2388.71px;top:458.70px;font-size:25.65px;line-height:25.65px;color:#2E66C0;transform:scaleX(0.9953);">Manage exit survey form</div><div class="t" style="left:2341.40px;top:544.30px;font-size:25.65px;line-height:25.65px;color:#5E6876;transform:scaleX(0.9912);">WHEN IS SURVEY SENT</div><div class="t" style="left:2340.87px;top:582.61px;font-size:24.93px;line-height:24.93px;color:#121A26;transform:scaleX(1.0337);">3 days before last working day</div><div class="t" style="left:2332.24px;top:737.29px;font-size:31.30px;line-height:31.30px;color:#121A26;transform:scaleX(1.0190);">Pending feedback</div><div class="t" style="left:2398.34px;top:1207.96px;font-size:27.10px;line-height:27.10px;color:#838C99;font-weight:700;transform:scaleX(0.9789);">No pending feedback available yet</div><div class="t" style="left:2346.92px;top:1274.06px;font-size:24.64px;line-height:24.64px;color:#8C94A0;transform:scaleX(1.0400);">Exit survey form is not yet sent to employees to</div><div class="t" style="left:2462.11px;top:1315.29px;font-size:23.42px;line-height:23.42px;color:#8C94A0;transform:scaleX(1.0946);">show some response here.</div>
</body></html>
